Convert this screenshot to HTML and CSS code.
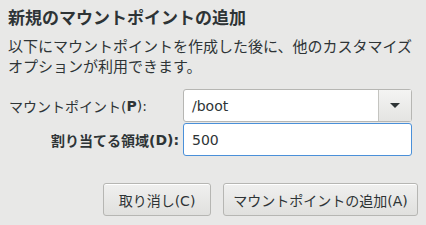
FILE: index.html
```html
<!DOCTYPE html>
<html lang="ja">
<head>
  <meta charset="UTF-8" />
  <title>新規のマウントポイントの追加</title>
  <link rel="stylesheet" href="styles.css">
</head>
<body>
  <div class="dialog">
    <h1 class="title">新規のマウントポイントの追加</h1>
    <p class="desc">以下にマウントポイントを作成した後に、他のカスタマイズ<br>オプションが利用できます。</p>

    <div class="form">
      <label class="label left">マウントポイント(<b>P</b>):</label>
      <div class="combo">
        <div class="combo-text">/boot</div>
        <div class="combo-btn"><span class="arrow"></span></div>
      </div>
      <label class="label right">割り当てる領域(<b>D</b>):</label>
      <div class="entry">500</div>
    </div>

    <div class="actions">
      <button class="btn cancel">取り消し(C)</button>
      <button class="btn add">マウントポイントの追加(A)</button>
    </div>
  </div>
</body>
</html>
```

FILE: styles.css
```css
body {
  margin: 0;
  width: 426px;
  height: 225px;
  background: #e8e8e7;
  font-family: "DejaVu Sans", "Noto Sans CJK JP", sans-serif;
  color: #2e3436;
  overflow: hidden;
}

.dialog {
  padding: 7px 8px 0 8px;
}

.title {
  margin: 0;
  font-size: 17px;
  font-weight: bold;
  line-height: 22px;
  color: #2e3436;
}

.desc {
  margin: 8px 0 0 0;
  font-size: 15px;
  line-height: 20px;
  color: #2e3436;
}

.form {
  display: grid;
  grid-template-columns: 175px 229px;
  grid-auto-rows: 33px;
  row-gap: 1px;
  margin-top: 12px;
}

.label {
  font-size: 14px;
  display: flex;
  align-items: center;
}

.label b {
  font-weight: bold;
}

.label.left {
  justify-content: flex-start;
  padding-left: 1px;
}

.label.right {
  justify-content: flex-end;
  font-weight: bold;
  padding-right: 4px;
}

.combo {
  display: flex;
  border: 1px solid #b6b6b3;
  border-radius: 3px;
  background: #ffffff;
  box-sizing: border-box;
}

.combo-text {
  flex: 1;
  display: flex;
  align-items: center;
  padding-left: 8px;
  font-size: 14px;
}

.combo-btn {
  width: 32px;
  display: flex;
  align-items: center;
  justify-content: center;
  border-left: 1px solid #c4c4c0;
  background: linear-gradient(#f4f4f3, #e4e4e2);
}

.arrow {
  width: 0;
  height: 0;
  border-left: 5px solid transparent;
  border-right: 5px solid transparent;
  border-top: 5px solid #2e3436;
}

.entry {
  display: flex;
  align-items: center;
  padding-left: 8px;
  font-size: 14px;
  background: #ffffff;
  border: 1px solid #4a90d9;
  border-radius: 3px;
  box-sizing: border-box;
}

.actions {
  display: flex;
  justify-content: flex-end;
  gap: 12px;
  margin-top: 27px;
  padding-right: 0;
}

.btn {
  height: 33px;
  font-family: inherit;
  font-size: 14px;
  color: #2e3436;
  border: 1px solid #b6b6b3;
  border-radius: 3px;
  background: linear-gradient(#f0f0ef, #e0e0de);
  box-shadow: inset 0 1px #ffffff;
  padding: 0;
}

.cancel {
  width: 108px;
}

.add {
  width: 195px;
}
```
